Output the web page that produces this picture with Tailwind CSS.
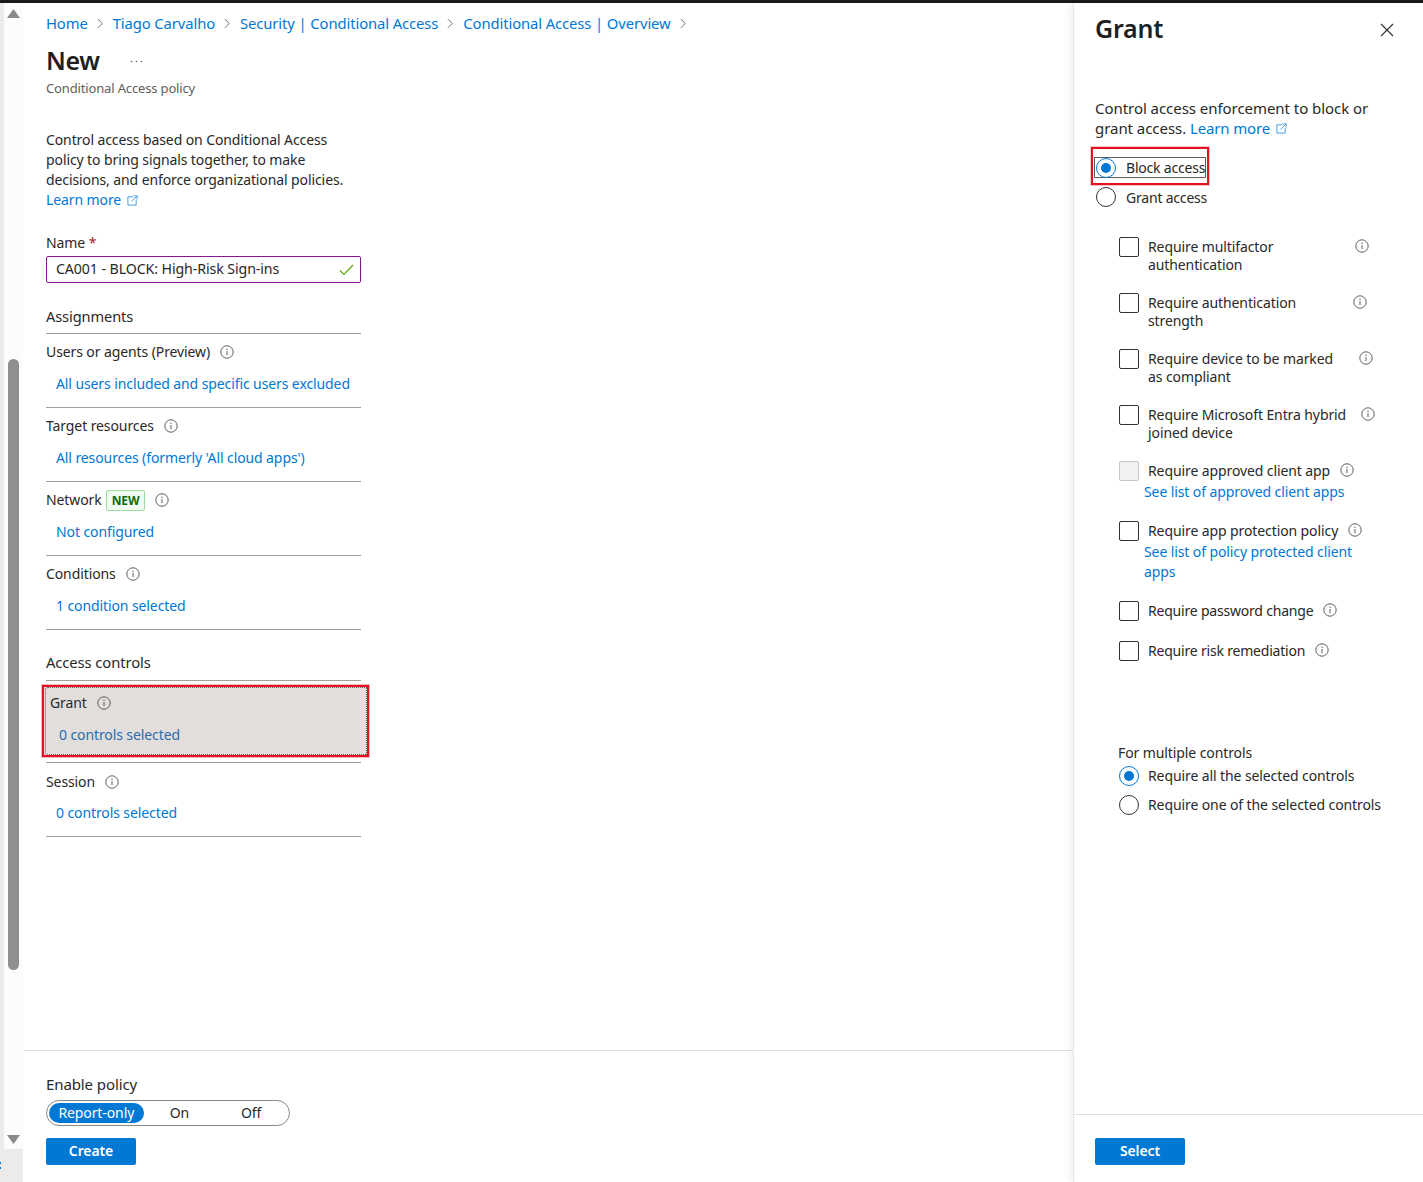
<!DOCTYPE html>
<html lang="en">
<head>
<meta charset="UTF-8">
<title>New - Conditional Access policy</title>
<script src="https://cdn.jsdelivr.net/npm/@tailwindcss/browser@4"></script>
</head>
<body class="bg-white font-['Noto_Sans',sans-serif] text-[14px] leading-[20px] text-[#292827] tracking-[-0.1px] overflow-hidden">
<svg class="hidden">
  <symbol id="info" viewBox="0 0 14 14"><circle cx="7" cy="7" r="6.2" fill="none" stroke="#605e5c" stroke-width="1"/><path d="M7 6v4.2" stroke="#605e5c" stroke-width="1"/><circle cx="7" cy="4.2" r=".7" fill="#605e5c"/></symbol>
  <symbol id="ext" viewBox="0 0 12 12"><path d="M6.5 2H1v9h9V5.5M7 1h4v4M11 1 5 7" fill="none" stroke="#3a96dd" stroke-width="1"/></symbol>
  <symbol id="chev" viewBox="0 0 8 12"><path d="M1 1l5 5-5 5" fill="none" stroke="#605e5c" stroke-width="1"/></symbol>
</svg>
<div class="h-[3px] bg-[#1b1a19]"></div>
<div class="flex h-[1179px]">
  <!-- page scrollbar -->
  <div class="w-[23px] shrink-0 flex flex-col bg-[#ebebeb]">
    <div class="h-[1146px] ml-[4px] bg-[#fcfcfc] flex flex-col items-center">
      <svg class="mt-[6px]" width="13" height="9" viewBox="0 0 13 9"><path d="M6.5 0 13 9H0z" fill="#8a8a8a"/></svg>
      <div class="w-[11px] h-[611px] mt-[341px] rounded-full bg-[#8f8f8f]"></div>
      <svg class="mt-[165px]" width="13" height="9" viewBox="0 0 13 9"><path d="M6.5 9 13 0H0z" fill="#8a8a8a"/></svg>
    </div>
    <div class="mt-[13px] flex flex-col gap-[3px]">
      <span class="w-[1px] h-[2px] bg-[#0078d4]"></span>
      <span class="w-[1px] h-[2px] bg-[#0078d4]"></span>
    </div>
  </div>

  <!-- blade content -->
  <div class="flex-1 flex flex-col min-w-0">
    <div class="flex-1 pl-[23px]">
      <nav class="flex items-center h-[20px] mt-[10px] text-[#0078d4] text-[14.8px]">
        <a>Home</a><svg class="mx-[9px]" width="7" height="11"><use href="#chev"/></svg>
        <a>Tiago Carvalho</a><svg class="mx-[9px]" width="7" height="11"><use href="#chev"/></svg>
        <a>Security | Conditional Access</a><svg class="mx-[9px]" width="7" height="11"><use href="#chev"/></svg>
        <a>Conditional Access | Overview</a><svg class="mx-[9px]" width="7" height="11"><use href="#chev"/></svg>
      </nav>
      <div class="flex items-center h-[36px] mt-[9px]">
        <h1 class="text-[25px] font-semibold text-[#201f1e] tracking-[-0.3px]">New</h1>
        <svg class="ml-[30px] mt-[2px]" width="13" height="3" viewBox="0 0 13 3"><circle cx="1.5" cy="1.5" r=".8" fill="#605e5c"/><circle cx="6.5" cy="1.5" r=".8" fill="#605e5c"/><circle cx="11.5" cy="1.5" r=".8" fill="#605e5c"/></svg>
      </div>
      <p class="text-[13px] text-[#605e5c] tracking-[-0.15px]">Conditional Access policy</p>

      <div class="w-[315px]">
        <p class="mt-[32px] w-[310px]">Control access based on Conditional Access policy to bring signals together, to make decisions, and enforce organizational policies.</p>
        <a class="flex items-center text-[#0078d4]">Learn more<svg class="ml-[6px]" width="11" height="11"><use href="#ext"/></svg></a>

        <label class="block mt-[23px]">Name <span class="text-[#a4262c]">*</span></label>
        <div class="flex items-center justify-between h-[27px] mt-[3px] px-[9px] border border-[#881798] rounded-[2px]">
          <span class="-mt-[2px] text-[14.2px]">CA001 - BLOCK: High-Risk Sign-ins</span>
          <svg class="-mr-[3px]" width="15" height="12" viewBox="0 0 15 12"><path d="M1 6.5 5 10.5 14 1" fill="none" stroke="#5fa800" stroke-width="1.2"/></svg>
        </div>

        <h2 class="mt-[23px] h-[27px] text-[14.6px]">Assignments</h2>
        <div class="border-t border-[#a19f9d] pt-[8px] h-[74px]">
          <div class="flex items-center">Users or agents (Preview)<svg class="ml-[10px]" width="14" height="14"><use href="#info"/></svg></div>
          <a class="block mt-[12px] ml-[10px] text-[#0078d4]">All users included and specific users excluded</a>
        </div>
        <div class="border-t border-[#a19f9d] pt-[8px] h-[74px]">
          <div class="flex items-center">Target resources<svg class="ml-[10px]" width="14" height="14"><use href="#info"/></svg></div>
          <a class="block mt-[12px] ml-[10px] text-[#0078d4]">All resources (formerly 'All cloud apps')</a>
        </div>
        <div class="border-t border-[#a19f9d] pt-[8px] h-[74px]">
          <div class="flex items-center h-[20px]">Network<span class="ml-[4px] h-[21px] px-[5px] border border-[#9fdc9f] bg-[#f1faf1] rounded-[2px] text-[#0b6a0b] text-[12px] font-bold leading-[19px]">NEW</span><svg class="ml-[10px]" width="14" height="14"><use href="#info"/></svg></div>
          <a class="block mt-[12px] ml-[10px] text-[#0078d4]">Not configured</a>
        </div>
        <div class="border-t border-[#a19f9d] pt-[8px] h-[74px]">
          <div class="flex items-center">Conditions<svg class="ml-[10px]" width="14" height="14"><use href="#info"/></svg></div>
          <a class="block mt-[12px] ml-[10px] text-[#0078d4]">1 condition selected</a>
        </div>
        <div class="border-t border-[#a19f9d]"></div>

        <h2 class="mt-[22px] h-[28px] text-[14.8px]">Access controls</h2>
        <div class="border-t border-[#a19f9d] h-[82px] pt-[4px]">
          <div class="-ml-[4px] w-[327px] h-[72px] border-[2px] border-[#e81123] outline outline-[1px] outline-[#f4b9bd] bg-[#e1dedb]">
            <div class="h-full ml-[1px] border border-dotted border-[#605e5c] rounded-l-[3px] pt-[5px] pl-[4px]">
              <div class="flex items-center">Grant<svg class="ml-[10px]" width="14" height="14"><use href="#info"/></svg></div>
              <a class="block mt-[12px] ml-[9px] text-[#2b6cb0]">0 controls selected</a>
            </div>
          </div>
        </div>
        <div class="border-t border-[#a19f9d] pt-[9px] h-[74px]">
          <div class="flex items-center">Session<svg class="ml-[10px]" width="14" height="14"><use href="#info"/></svg></div>
          <a class="block mt-[11px] ml-[10px] text-[#0078d4]">0 controls selected</a>
        </div>
        <div class="border-t border-[#a19f9d]"></div>
      </div>
    </div>

    <footer class="h-[132px] border-t border-[#e1dfdd] pl-[23px] pt-[23px]">
      <div class="text-[15px]">Enable policy</div>
      <div class="flex items-center w-[244px] h-[26px] mt-[6px] border border-[#8a8886] rounded-full px-[2px]">
        <span class="w-[95px] h-[20px] rounded-full bg-[#0078d4] text-white text-center">Report-only</span>
        <span class="w-[72px] text-center">On</span>
        <span class="w-[72px] text-center">Off</span>
      </div>
      <button class="block w-[90px] h-[27px] mt-[12px] pb-[2px] bg-[#0078d4] rounded-[2px] text-white font-semibold">Create</button>
    </footer>
  </div>

  <!-- grant panel -->
  <aside class="w-[350px] shrink-0 flex flex-col border-l border-[#e8e8e8] shadow-[-3px_0_6px_rgba(0,0,0,0.06)] z-10">
    <div class="flex-1 pl-[21px]">
      <div class="flex items-start justify-between pr-[29px]">
        <h2 class="text-[25px] font-semibold leading-[36px] mt-[7px] text-[#201f1e] tracking-[-0.2px]">Grant</h2>
        <svg class="mt-[20px]" width="14" height="14" viewBox="0 0 14 14"><path d="M1 1l12 12M13 1 1 13" stroke="#323130" stroke-width="1.1"/></svg>
      </div>
      <p class="mt-[52px] w-[290px] text-[15px] tracking-[-0.05px]">Control access enforcement to block or grant access. <a class="text-[#0078d4] tracking-[-0.15px]">Learn more<svg class="inline ml-[6px] mb-[2px]" width="11" height="11"><use href="#ext"/></svg></a></p>

      <div class="relative flex items-center h-[21px] mt-[19px] w-[112px] -ml-px pl-px border border-[#605e5c]">
        <span class="flex items-center justify-center w-[20px] h-[20px] rounded-full border border-[#0078d4] shrink-0"><span class="w-[10px] h-[10px] rounded-full bg-[#0078d4]"></span></span>
        <span class="ml-[10px] mt-[1px] whitespace-nowrap tracking-[-0.2px]">Block access</span>
        <div class="absolute -left-[4px] -top-[11px] w-[118px] h-[38px] border-[2px] border-[#e81123] outline outline-[1px] outline-[#f7c5c8]"></div>
      </div>
      <div class="flex items-center mt-[9px] h-[20px]">
        <span class="w-[20px] h-[20px] rounded-full border border-[#323130] ml-[1px] shrink-0"></span>
        <span class="ml-[10px] mt-[1px] tracking-[-0.2px]">Grant access</span>
      </div>

      <div class="ml-[24px] mt-[30px] flex flex-col">
        <div class="flex h-[56px] items-start">
          <span class="w-[20px] h-[20px] border border-[#323130] rounded-[2px] shrink-0"></span>
          <span class="ml-[9px] w-[207px] leading-[18px] mt-[1px]">Require multifactor authentication</span>
          <svg width="14" height="14" class="mt-[2px]"><use href="#info"/></svg>
        </div>
        <div class="flex h-[56px] items-start">
          <span class="w-[20px] h-[20px] border border-[#323130] rounded-[2px] shrink-0"></span>
          <span class="ml-[9px] w-[205px] leading-[18px] mt-[1px]">Require authentication strength</span>
          <svg width="14" height="14" class="mt-[2px]"><use href="#info"/></svg>
        </div>
        <div class="flex h-[56px] items-start">
          <span class="w-[20px] h-[20px] border border-[#323130] rounded-[2px] shrink-0"></span>
          <span class="ml-[9px] w-[211px] leading-[18px] mt-[1px]">Require device to be marked<br>as compliant</span>
          <svg width="14" height="14" class="mt-[2px]"><use href="#info"/></svg>
        </div>
        <div class="flex h-[56px] items-start">
          <span class="w-[20px] h-[20px] border border-[#323130] rounded-[2px] shrink-0"></span>
          <span class="ml-[9px] w-[213px] leading-[18px] mt-[1px]">Require Microsoft Entra hybrid joined device</span>
          <svg width="14" height="14" class="mt-[2px]"><use href="#info"/></svg>
        </div>
        <div class="h-[60px]">
          <div class="flex items-start">
            <span class="w-[20px] h-[20px] border border-[#c8c6c4] bg-[#f3f2f1] rounded-[2px] shrink-0"></span>
            <span class="ml-[9px] whitespace-nowrap">Require approved client app</span>
            <svg width="14" height="14" class="ml-[10px] mt-[2px]"><use href="#info"/></svg>
          </div>
          <a class="block mt-[1px] ml-[25px] text-[#0078d4]">See list of approved client apps</a>
        </div>
        <div class="h-[80px]">
          <div class="flex items-start">
            <span class="w-[20px] h-[20px] border border-[#323130] rounded-[2px] shrink-0"></span>
            <span class="ml-[9px] whitespace-nowrap">Require app protection policy</span>
            <svg width="14" height="14" class="ml-[10px] mt-[2px]"><use href="#info"/></svg>
          </div>
          <a class="block mt-[1px] ml-[25px] w-[225px] text-[#0078d4]">See list of policy protected client apps</a>
        </div>
        <div class="h-[40px] flex items-start">
          <span class="w-[20px] h-[20px] border border-[#323130] rounded-[2px] shrink-0"></span>
          <span class="ml-[9px] whitespace-nowrap tracking-[-0.2px]">Require password change</span>
          <svg width="14" height="14" class="ml-[10px] mt-[2px]"><use href="#info"/></svg>
        </div>
        <div class="h-[40px] flex items-start">
          <span class="w-[20px] h-[20px] border border-[#323130] rounded-[2px] shrink-0"></span>
          <span class="ml-[9px] whitespace-nowrap tracking-[-0.2px]">Require risk remediation</span>
          <svg width="14" height="14" class="ml-[10px] mt-[2px]"><use href="#info"/></svg>
        </div>
      </div>

      <div class="ml-[23px] mt-[62px]">
        <div>For multiple controls</div>
        <div class="flex items-center h-[20px] mt-[3px] ml-px">
          <span class="flex items-center justify-center w-[20px] h-[20px] rounded-full border border-[#0078d4] shrink-0"><span class="w-[10px] h-[10px] rounded-full bg-[#0078d4]"></span></span>
          <span class="ml-[9px]">Require all the selected controls</span>
        </div>
        <div class="flex items-center h-[20px] mt-[9px] ml-px">
          <span class="w-[20px] h-[20px] rounded-full border border-[#323130] shrink-0"></span>
          <span class="ml-[9px] whitespace-nowrap">Require one of the selected controls</span>
        </div>
      </div>
    </div>
    <footer class="h-[68px] border-t border-[#e1dfdd] pl-[21px] pt-[23px]">
      <button class="block w-[90px] h-[27px] pb-[2px] bg-[#0078d4] rounded-[2px] text-white font-semibold">Select</button>
    </footer>
  </aside>
</div>
</body>
</html>
